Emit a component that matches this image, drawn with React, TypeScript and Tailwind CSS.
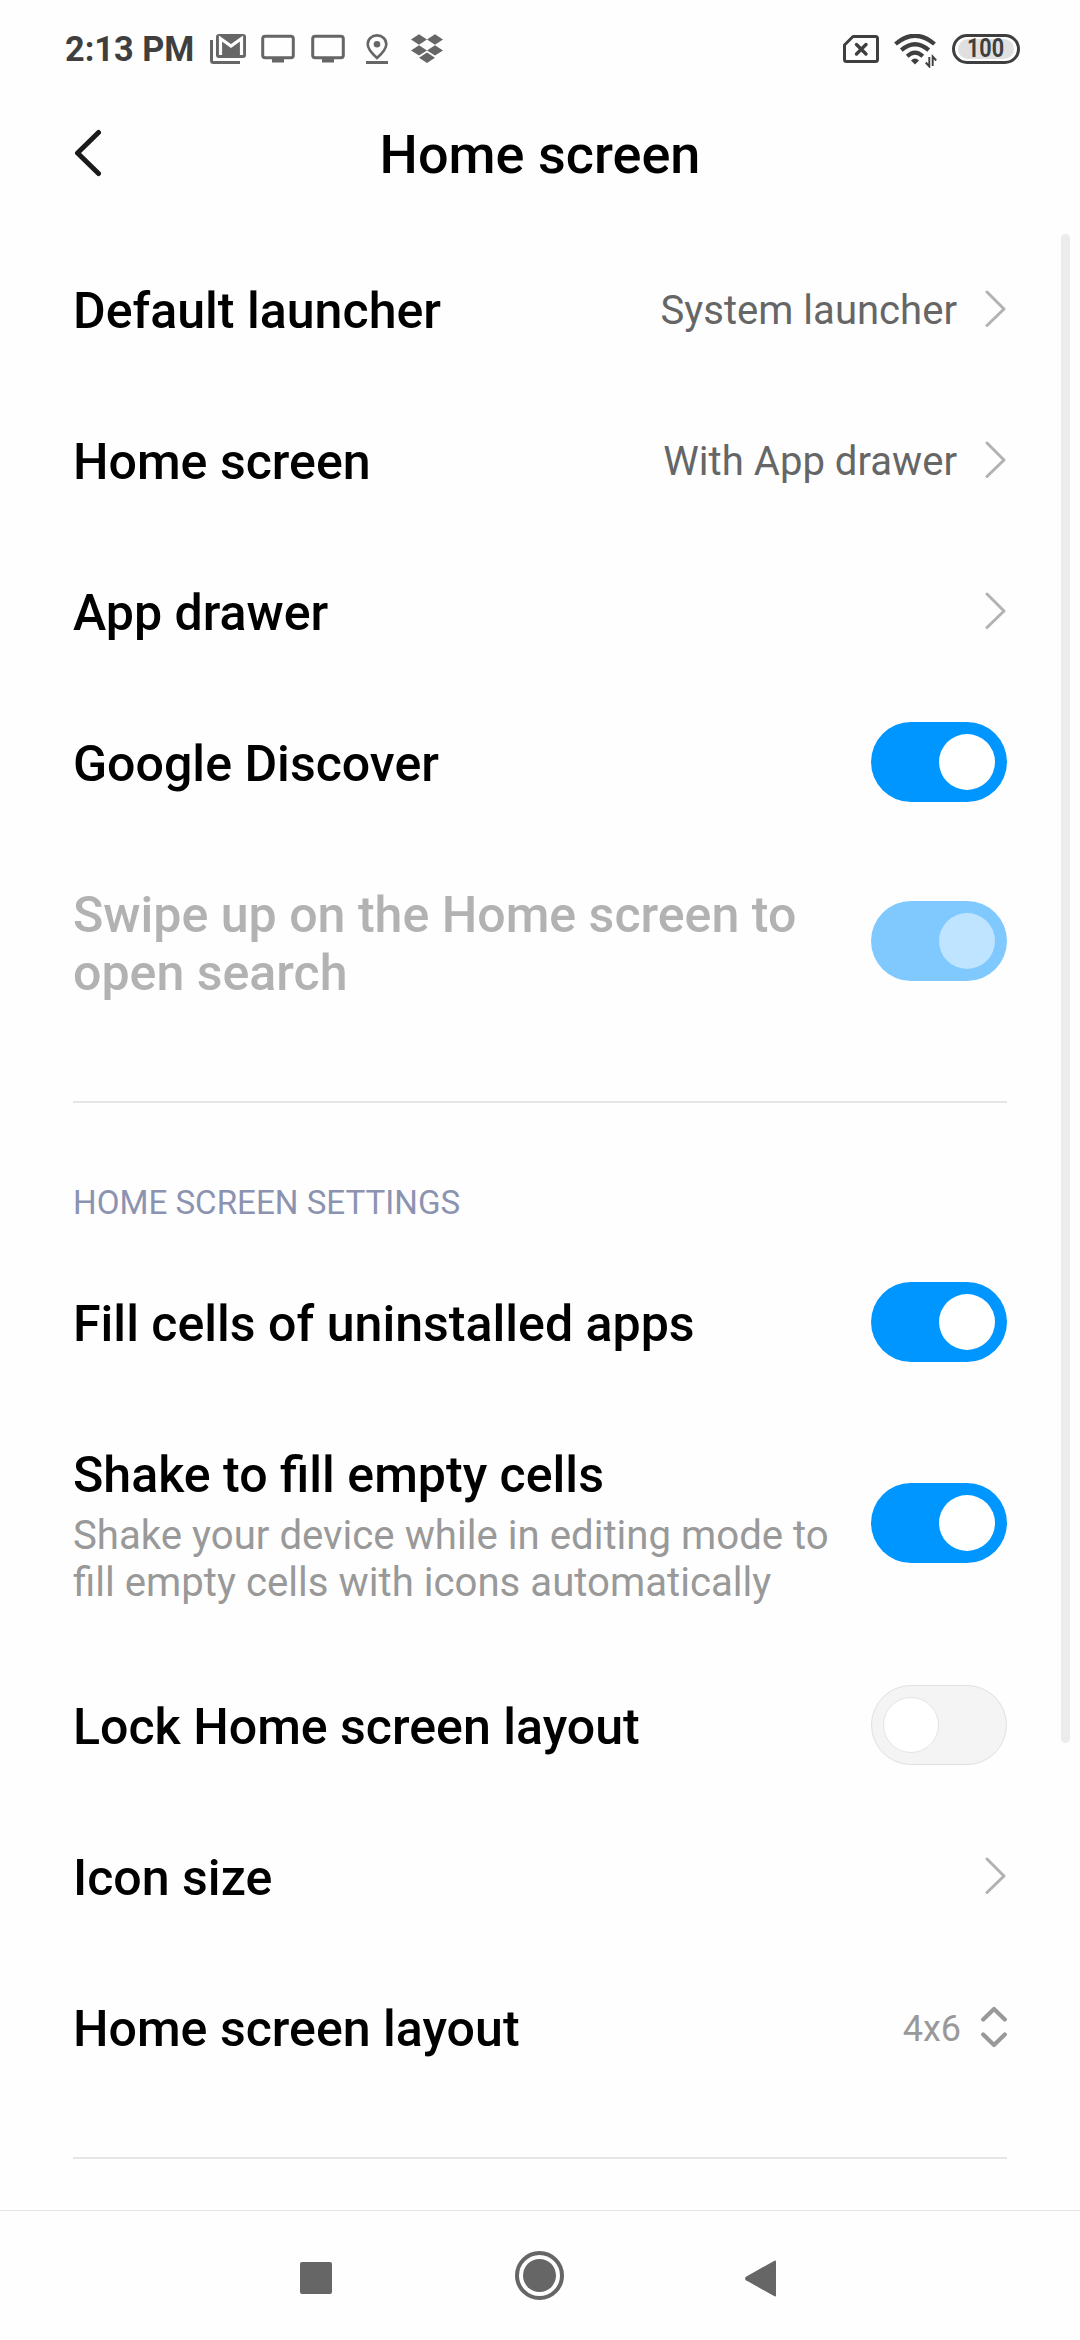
import type { ReactNode } from "react";

function Chevron() {
  return (
    <svg className="block h-[38px] w-[22px]" viewBox="0 0 22 38" fill="none" stroke="#b2b2b2" strokeWidth="3" strokeLinecap="round" strokeLinejoin="round">
      <path d="M2 2 19 19 2 35.5" />
    </svg>
  );
}

function UpDown() {
  return (
    <svg className="block h-[42px] w-[26px]" viewBox="0 0 26 42" fill="none" stroke="#999" strokeWidth="4.2" strokeLinecap="round" strokeLinejoin="round">
      <path d="M2.200 13.500 13 3 23.800 13.500M2.200 28.500 13 39 23.800 28.500" />
    </svg>
  );
}

function Switch({ on, disabled }: { on?: boolean; disabled?: boolean }) {
  if (!on) {
    return (
      <div className="flex h-20 w-[136px] items-center rounded-full border border-[#e0e0e0] bg-[#f4f4f4] pl-[11px]">
        <div className="size-14 rounded-full border border-[#e4e4e4] bg-white" />
      </div>
    );
  }
  return (
    <div className={`flex h-20 w-[136px] items-center justify-end rounded-full pr-3 ${disabled ? "bg-[#7fc9ff]" : "bg-[#0096ff]"}`}>
      <div className={`size-14 rounded-full ${disabled ? "bg-[#bfe4ff]" : "bg-white"}`} />
    </div>
  );
}

type RowProps = { title: string; desc?: string; value?: string; tall?: string; disabled?: boolean; children: ReactNode };

function Row({ title, desc, value, tall = "h-[151px]", disabled, children }: RowProps) {
  return (
    <div className={`flex items-center justify-between ${tall}`}>
      <div className={`shrink-0 pt-[5px] ${value ? "" : "w-[770px]"}`}>
        <div className={`text-[50.100px] leading-[58px] font-medium ${disabled ? "text-[#b2b2b2]" : "text-black"}`}>{title}</div>
        {desc && <div className="pt-2 text-[40.180px] leading-[47px] text-[#999]">{desc}</div>}
      </div>
      <div className={`flex shrink-0 items-center ${disabled ? "pb-px" : ""}`}>
        {value && <div className="pt-[3px] pr-7 text-[40.100px] leading-[47px] whitespace-nowrap text-[#666]">{value}</div>}
        {children}
      </div>
    </div>
  );
}

function Divider() {
  return <div className="h-0.5 bg-[#e5e5e5]" />;
}

function Monitor() {
  return (
    <svg className="block h-[30px] w-[34px]" viewBox="0 0 34 30">
      <rect x="1.7" y="2.2" width="30.6" height="21.6" rx="2.5" fill="none" stroke="#666" strokeWidth="3" />
      <path d="M11 24h12v4.5H11z" fill="#666" />
    </svg>
  );
}

function StatusBar() {
  return (
    <div className="flex h-[100px] items-start justify-between pr-[60px] pl-[65px]">
      <div className="flex items-start pt-[34px]">
        <div className="w-[145px] text-[34.300px] leading-[30px] font-bold whitespace-nowrap text-[#3f3f3f]">2:13 PM</div>
        <svg className="block h-[30px] w-[36px]" viewBox="0 0 36 30">
          <path d="M1.5 6v20.500q0 2 2 2H30" fill="none" stroke="#666" strokeWidth="3" />
          <rect x="6" y="0" width="30" height="24" rx="3" fill="#666" />
          <path d="M10.500 21V4.500L21 12l10.500-7.500V21" fill="none" stroke="#fefefe" strokeWidth="3.200" />
        </svg>
        <div className="ml-[15px]"><Monitor /></div>
        <div className="ml-4"><Monitor /></div>
        <svg className="ml-[21px] block h-[30px] w-[22px]" viewBox="0 0 22 30">
          <path d="M11 1.400C5.700 1.400 1.700 5.300 1.700 10.300 1.700 15.500 7 20.500 11 24c4-3.500 9.300-8.500 9.300-13.700C20.300 5.300 16.300 1.400 11 1.400Z" fill="none" stroke="#666" strokeWidth="2.600" />
          <circle cx="11" cy="10.300" r="3.300" fill="#666" />
          <path d="M0 27h22v3H0z" fill="#666" />
        </svg>
        <svg className="ml-[22px] block h-[30px] w-[34px]" viewBox="0 0 34 30" fill="#666">
          <path d="M9 .3 17 5.500 9 10.700 1 5.500ZM25 .3l8 5.200-8 5.200-8-5.200ZM9 11.200l8 5.200-8 5.200-8-5.200ZM25 11.200l8 5.200-8 5.200-8-5.200ZM17 18.500l8 5.300-8 5.300-8-5.300Z" />
        </svg>
      </div>
      <div className="flex items-start pt-[34px]">
        <svg className="block h-[30px] w-[36px]" viewBox="0 0 36 30" fill="none" stroke="#3f3f3f" strokeWidth="3" strokeLinejoin="round">
          <path d="M10 2.500H32.500q2 0 2 2V25.500q0 2-2 2H3.500q-2 0-2-2V11Z" />
          <path d="m13.500 10.500 9.500 9.500m0-9.500-9.500 9.500" strokeWidth="3.400" strokeLinecap="round" />
        </svg>
        <svg className="ml-[15px] block h-[34px] w-[44px]" viewBox="0 0 44 34" fill="none" stroke="#3f3f3f">
          <path d="M1.500 10Q21 -6.500 40.500 10" strokeWidth="4.200" />
          <path d="M7.300 16.200Q21 4.300 34.700 16.200" strokeWidth="4.200" />
          <path d="M13.200 22.200Q21 15 28.800 22.200" strokeWidth="4.200" />
          <path d="M17 26.500q4-3.800 8 0L21 30.500Z" fill="#3f3f3f" stroke="none" />
          <path d="M35.300 23v9.500l-3.500-4M38.700 32v-9.500l3.500 4" strokeWidth="1.900" />
        </svg>
        <div className="ml-[14px] flex h-[30px] w-[68px] items-center rounded-full border-[3px] border-[#3f3f3f] px-[3px]">
          <div className="flex h-5 w-full items-center justify-center rounded-full bg-[#e0e0e0]">
            <span className="scale-x-[0.86] text-[25px] leading-5 font-bold text-[#3f3f3f]">100</span>
          </div>
        </div>
      </div>
    </div>
  );
}

export default function App() {
  return (
    <div className="relative flex h-[2340px] w-[1080px] flex-col overflow-hidden bg-[#fefefe] font-['Roboto',sans-serif]">
      <StatusBar />
      <header className="grid h-[133px] grid-cols-[60px_1fr_60px] items-start px-[73px]">
        <svg className="mt-[29px] block h-[48px] w-[30px]" viewBox="0 0 30 48" fill="none" stroke="#1a1a1a" strokeWidth="5" strokeLinecap="round" strokeLinejoin="round">
          <path d="M25.500 3.500 4.500 24 25.500 44.500" />
        </svg>
        <h1 className="pt-6 text-center text-[54px] leading-[62px] font-medium text-black">Home screen</h1>
      </header>
      <main className="flex flex-col px-[73px]">
        <Row title="Default launcher" value="System launcher"><Chevron /></Row>
        <Row title="Home screen" value="With App drawer"><Chevron /></Row>
        <Row title="App drawer"><Chevron /></Row>
        <Row title="Google Discover"><Switch on /></Row>
        <Row title="Swipe up on the Home screen to open search" tall="h-[209px]" disabled><Switch on disabled /></Row>
        <div className="pt-[55px]"><Divider /></div>
        <h2 className="h-[143px] pt-[80px] text-[33.150px] leading-[40px] text-[#8c93b0]">HOME SCREEN SETTINGS</h2>
        <Row title="Fill cells of uninstalled apps"><Switch on /></Row>
        <Row title="Shake to fill empty cells" desc="Shake your device while in editing mode to fill empty cells with icons automatically" tall="h-[252px]"><Switch on /></Row>
        <Row title="Lock Home screen layout"><Switch /></Row>
        <Row title="Icon size"><Chevron /></Row>
        <Row title="Home screen layout">
          <div className="pt-[5px] pr-5 text-[36px] leading-[42px] text-[#999]">4x6</div>
          <UpDown />
        </Row>
        <div className="pt-[55px]"><Divider /></div>
      </main>
      <nav className="mt-auto flex h-[130px] items-start border-t border-[#e5e5e5]">
        <div className="mt-[51px] ml-[300px] size-8 rounded-[2px] bg-[#666]" />
        <div className="mt-10 ml-[183px] flex size-[49px] items-center justify-center rounded-full border-4 border-[#666]">
          <div className="size-[33px] rounded-full bg-[#666]" />
        </div>
        <svg className="mt-[49px] ml-[181px] block h-[37px] w-[31px]" viewBox="0 0 31 37">
          <path d="M29.500.7Q31 0 31 1.500v34q0 1.500-1.500.8L1 20.300q-2-1.800 0-3.600Z" fill="#666" />
        </svg>
      </nav>
      <div className="absolute top-[234px] right-[10px] h-[1509px] w-[9px] rounded-full bg-[#ececec]" />
    </div>
  );
}
